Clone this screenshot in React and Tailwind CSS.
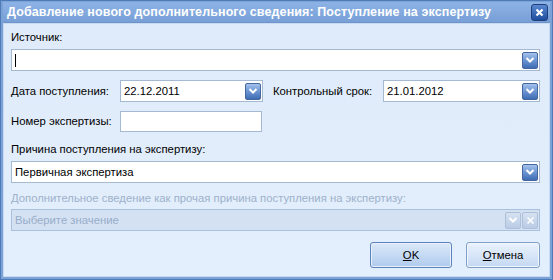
import React from "react";

const font = { fontFamily: '"Liberation Sans", Arial, sans-serif' };

function DropBtn({ disabled }) {
  return (
    <div
      className={
        "w-[16px] h-[17px] rounded-[2px] border flex items-center justify-center shrink-0 " +
        (disabled
          ? "border-[#aebfd8] bg-gradient-to-b from-[#d6e2f2] to-[#b9cbe5]"
          : "border-[#44679e] bg-gradient-to-b from-[#a4c2ec] via-[#6b94d2] to-[#3f6cb3]")
      }
    >
      <svg width="10" height="8" viewBox="0 0 10 8">
        <path d="M1.5 2 L5 5.5 L8.5 2" fill="none" stroke="#ffffff" strokeWidth="2" />
      </svg>
    </div>
  );
}

function XBtn() {
  return (
    <div className="w-[16px] h-[17px] rounded-[2px] border border-[#aebfd8] bg-gradient-to-b from-[#d6e2f2] to-[#b9cbe5] flex items-center justify-center shrink-0">
      <svg width="9" height="9" viewBox="0 0 9 9">
        <path d="M1.5 1.5 L7.5 7.5 M7.5 1.5 L1.5 7.5" fill="none" stroke="#ffffff" strokeWidth="1.6" />
      </svg>
    </div>
  );
}

function Combo({ children, className = "", disabled }) {
  return (
    <div
      className={
        "h-[22px] border flex items-center pl-[3px] pr-[1px] " +
        (disabled ? "border-[#a9c0de] bg-[#d4e1f3] " : "border-[#a6b9d2] bg-white ") +
        className
      }
    >
      <div className={"flex-1 text-[11.3px] " + (disabled ? "text-[#98adc9]" : "text-black")}>{children}</div>
      {disabled ? (
        <div className="flex gap-[1px]">
          <DropBtn disabled />
          <XBtn />
        </div>
      ) : (
        <DropBtn />
      )}
    </div>
  );
}

export default function App() {
  return (
    <div
      className="w-[553px] h-[280px] flex flex-col bg-[#dce9f9] border-[3px] border-[#7aa2d6] outline outline-1 outline-[#4f7ab8] -outline-offset-1"
      style={font}
    >
      <div className="h-[21px] -mt-[1px] shrink-0 bg-gradient-to-b from-[#8db3e6] to-[#789fd6] flex items-center pl-[4px] pr-[2px] border-b border-[#6d95cc]">
        <div className="flex-1 text-white text-[12.5px] font-bold tracking-[0.1px]">
          Добавление нового дополнительного сведения: Поступление на экспертизу
        </div>
        <div className="w-[17px] h-[17px] rounded-[3px] border border-[#1f3f7c] bg-gradient-to-b from-[#5a88d0] to-[#1e4d9e] flex items-center justify-center">
          <svg width="9" height="9" viewBox="0 0 9 9">
            <path d="M1.5 1.5 L7.5 7.5 M7.5 1.5 L1.5 7.5" fill="none" stroke="#ffffff" strokeWidth="2.2" />
          </svg>
        </div>
      </div>

      <div className="flex-1 flex flex-col pl-[7px] pr-[9px] bg-gradient-to-b from-[#dfebfa] to-[#e3effc] border-[1px] border-[#c9dbf1] text-[11.3px]">
        <div className="text-black mt-[6px] h-[15px] leading-[15px]">Источник:</div>
        <div className="mt-[4px] h-[22px] border border-[#a6b9d2] bg-white flex items-center pl-[3px] pr-[1px]">
          <div className="flex-1 flex items-center">
            <div className="w-[1px] h-[13px] bg-black" />
          </div>
          <DropBtn />
        </div>

        <div className="mt-[9px] flex items-center h-[22px]">
          <div className="w-[109px] whitespace-nowrap">Дата поступления:</div>
          <Combo className="w-[143px]">22.12.2011</Combo>
          <div className="w-[120px] pl-[10px] whitespace-nowrap">Контрольный срок:</div>
          <Combo className="flex-1">21.01.2012</Combo>
        </div>

        <div className="mt-[9px] flex items-center h-[21px]">
          <div className="w-[109px] whitespace-nowrap">Номер экспертизы:</div>
          <div className="w-[142px] h-[21px] border border-[#a6b9d2] bg-white" />
        </div>

        <div className="mt-[10px] h-[15px] leading-[15px]">Причина поступления на экспертизу:</div>
        <Combo className="mt-[4px]">Первичная экспертиза</Combo>

        <div className="mt-[8px] h-[15px] leading-[15px] text-[#9eb1cb] whitespace-nowrap">
          Дополнительное сведение как прочая причина поступления на экспертизу:
        </div>
        <Combo className="mt-[3px]" disabled>Выберите значение</Combo>

        <div className="mt-[11px] flex justify-end gap-[14px]">
          <button className="w-[82px] h-[26px] rounded-[3px] border border-[#5b82bd] bg-gradient-to-b from-[#dbe8f8] via-[#c5daf3] to-[#b0cbee] text-[11.3px] text-black shadow-[inset_0_0_0_1px_#e9f1fb]">
            <span className="underline">O</span>K
          </button>
          <button className="w-[74px] h-[26px] rounded-[3px] border border-[#7f9fc8] bg-gradient-to-b from-[#eaf2fc] via-[#d8e6f8] to-[#c4d8f2] text-[11.3px] text-black shadow-[inset_0_0_0_1px_#f2f7fd]">
            <span className="underline">О</span>тмена
          </button>
        </div>
      </div>
    </div>
  );
}
